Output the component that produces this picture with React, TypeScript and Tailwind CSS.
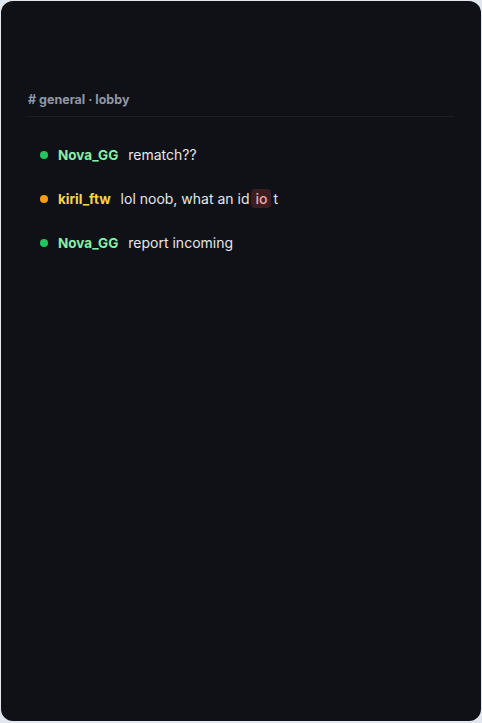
type Msg = {
  user: string;
  dot: string;
  nameColor: string;
  text: React.ReactNode;
};

const messages: Msg[] = [
  {
    user: "Nova_GG",
    dot: "bg-[#22c55e]",
    nameColor: "text-[#86efac]",
    text: "rematch??",
  },
  {
    user: "kiril_ftw",
    dot: "bg-[#f59e0b]",
    nameColor: "text-[#fcd34d]",
    text: (
      <>
        lol noob, what an id
        <span className="mx-[2px] rounded bg-[#3b1d22] px-1 py-px font-medium text-[#fca5a5]">io</span>
        t
      </>
    ),
  },
  {
    user: "Nova_GG",
    dot: "bg-[#22c55e]",
    nameColor: "text-[#86efac]",
    text: "report incoming",
  },
];

const ChatRow = ({ msg }: { msg: Msg }) => {
  return (
    <div className="flex items-center gap-2.5 px-3 py-3 text-sm leading-5">
      <span className={`h-2 w-2 shrink-0 rounded-full ${msg.dot}`} />
      <span className={`text-[13.5px] font-bold ${msg.nameColor}`}>{msg.user}</span>
      <span className="text-[#e5e7eb]">{msg.text}</span>
    </div>
  );
};

export default function App() {
  return (
    <div className="min-h-[723px] bg-[#e2e6ee] p-px" style={{ fontFamily: "Inter, 'Noto Sans', sans-serif" }}>
      <div className="h-[720px] w-[480px] rounded-xl bg-[#0f1116] px-[27px] pt-[91px]">
        <div className="border-b border-[#1c1f27] pb-2 text-[12.5px] font-bold leading-4 text-[#8f97a8]">
          # general · lobby
        </div>
        <div className="pt-4">
          {messages.map((m, i) => (
            <ChatRow key={i} msg={m} />
          ))}
        </div>
      </div>
    </div>
  );
}
